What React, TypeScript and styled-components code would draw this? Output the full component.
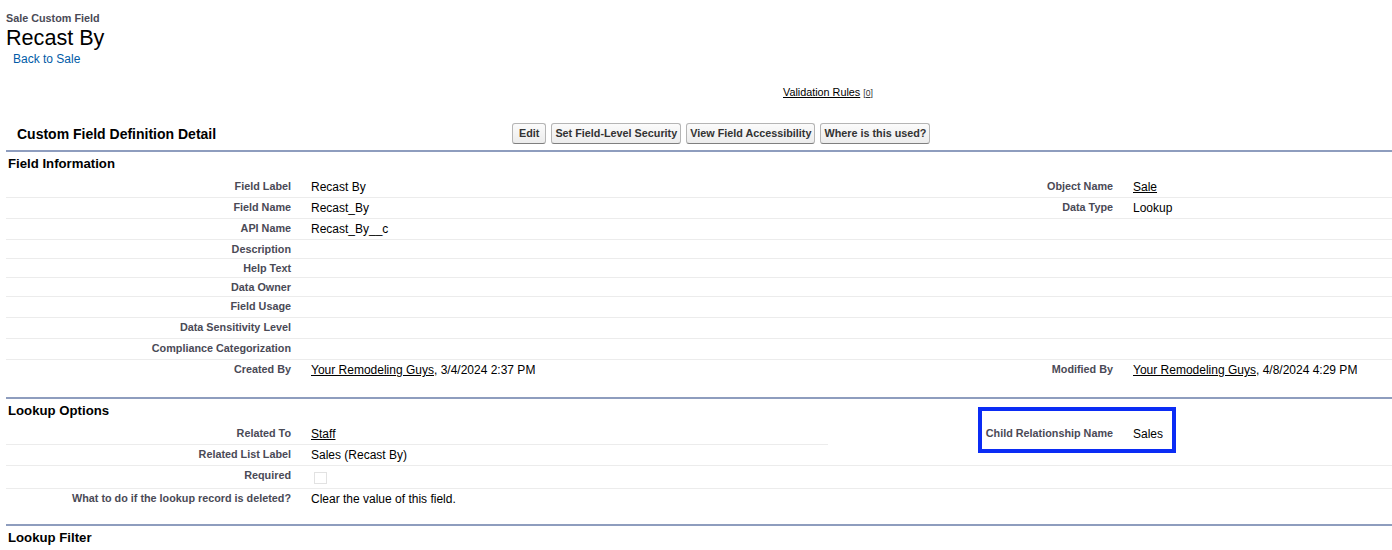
import React from "react";
import styled, { createGlobalStyle } from "styled-components";

const GlobalStyle = createGlobalStyle`
  html, body {
    margin: 0;
    padding: 0;
    background: #fff;
  }
  body {
    font-family: "Liberation Sans", Arial, sans-serif;
    font-size: 12px;
    color: #000;
  }
`;

type Cell = { text?: React.ReactNode; link?: string; after?: string; check?: boolean };

interface FieldRow {
  label: string;
  value?: Cell;
  label2?: string;
  value2?: Cell;
  plainRight?: boolean;
}

const NBSP = "\u00a0";

const fieldInfo: FieldRow[] = [
  { label: "Field Label", value: { text: "Recast By" }, label2: "Object Name", value2: { link: "Sale" } },
  { label: "Field Name", value: { text: "Recast_By" }, label2: "Data Type", value2: { text: "Lookup" } },
  { label: "API Name", value: { text: "Recast_By__c" } },
  { label: "Description" },
  { label: "Help Text" },
  { label: "Data Owner" },
  { label: "Field Usage", value: { text: NBSP } },
  { label: "Data Sensitivity Level", value: { text: NBSP } },
  { label: "Compliance Categorization", value: { text: NBSP } },
  {
    label: "Created By",
    value: { link: "Your Remodeling Guys", after: ", 3/4/2024 2:37 PM" },
    label2: "Modified By",
    value2: { link: "Your Remodeling Guys", after: ", 4/8/2024 4:29 PM" },
  },
];

const lookupOptions: FieldRow[] = [
  {
    label: "Related To",
    value: { link: "Staff" },
    label2: "Child Relationship Name",
    value2: { text: "Sales" },
    plainRight: true,
  },
  { label: "Related List Label", value: { text: "Sales (Recast By)" } },
  { label: "Required", value: { check: true } },
  { label: "What to do if the lookup record is deleted?", value: { text: "Clear the value of this field." } },
];

const CellContent: React.FC<{ cell?: Cell }> = ({ cell }) => {
  if (!cell) return null;
  if (cell.check) {
    return (
      <CheckImage width="21" height="16" viewBox="0 0 21 16">
        <rect x="3.5" y="3.5" width="12" height="11" fill="#fff" stroke="#c4c4c4" strokeDasharray="1 1" />
      </CheckImage>
    );
  }
  return (
    <>
      {cell.link && <DataLink href="#">{cell.link}</DataLink>}
      {cell.after}
      {cell.text}
    </>
  );
};

const DetailTable: React.FC<{ rows: FieldRow[] }> = ({ rows }) => (
  <div>
    {rows.map((r, i) => {
      const last = i === rows.length - 1;
      return (
        <Row key={r.label}>
          <Label $plain={last}>{r.label}</Label>
          <Value $plain={last}>
            <CellContent cell={r.value} />
          </Value>
          <Label $plain={last || r.plainRight}>{r.label2}</Label>
          <Value $plain={last || r.plainRight}>
            <CellContent cell={r.value2} />
          </Value>
        </Row>
      );
    })}
  </div>
);

const App: React.FC = () => {
  return (
    <Page>
      <GlobalStyle />
      <Header>
        <Kicker>Sale Custom Field</Kicker>
        <PageTitle>Recast By</PageTitle>
        <BackLink href="#">Back to Sale</BackLink>
      </Header>

      <ListLinks>
        <DataLink href="#">Validation Rules</DataLink>
        <Count>
          [<u>0</u>]
        </Count>
      </ListLinks>

      <TitleRow>
        <BlockTitle>Custom Field Definition Detail</BlockTitle>
        <ButtonGroup>
          <Button>{NBSP}Edit{NBSP}</Button>
          <Button>Set Field-Level Security</Button>
          <Button>View Field Accessibility</Button>
          <Button>Where is this used?</Button>
        </ButtonGroup>
      </TitleRow>

      <Section $top={6}>
        <SectionHeader>Field Information</SectionHeader>
        <DetailTable rows={fieldInfo} />
      </Section>

      <Section $top={16}>
        <SectionHeader>Lookup Options</SectionHeader>
        <DetailTable rows={lookupOptions} />
      </Section>

      <Section $top={14}>
        <SectionHeader>Lookup Filter</SectionHeader>
      </Section>

      <Highlight />
    </Page>
  );
};

export default App;

const Page = styled.div`
  position: relative;
  width: 1392px;
  box-sizing: border-box;
  padding: 12px 0 0 6px;
`;

const Header = styled.div`
  display: flex;
  flex-direction: column;
  align-items: flex-start;
`;

const Kicker = styled.div`
  font-size: 10.8px;
  font-weight: bold;
  line-height: 13px;
  color: #4a4a56;
`;

const PageTitle = styled.h1`
  margin: 0;
  font-size: 21.6px;
  font-weight: normal;
  line-height: 25px;
  color: #000;
`;

const BackLink = styled.a`
  margin: 2px 0 0 7px;
  font-size: 12px;
  line-height: 14px;
  color: #015ba7;
  text-decoration: none;
`;

const ListLinks = styled.div`
  margin-top: 20px;
  padding-left: 777px;
  font-size: 10.8px;
  line-height: 13px;
`;

const DataLink = styled.a`
  color: #000;
  text-decoration: underline;
`;

const Count = styled.span`
  margin-left: 3px;
  font-size: 8.6px;
  color: #333;
`;

const TitleRow = styled.div`
  display: flex;
  align-items: center;
  margin-top: 23px;
  height: 21px;
`;

const BlockTitle = styled.h2`
  margin: 0;
  width: 506px;
  box-sizing: border-box;
  padding: 2px 0 0 11px;
  font-size: 14px;
  font-weight: bold;
  line-height: 17px;
  color: #000;
`;

const ButtonGroup = styled.div`
  display: flex;
  gap: 5px;
`;

const Button = styled.button`
  margin: 0;
  padding: 3px 3px;
  height: 21px;
  font-family: "Liberation Sans", Arial, sans-serif;
  font-size: 10.8px;
  font-weight: bold;
  line-height: 13px;
  color: #333;
  background: linear-gradient(#fbfbfb, #ececec);
  border: 1px solid #b5b5b5;
  border-bottom-color: #7f7f7f;
  border-radius: 3px;
  white-space: nowrap;
  cursor: pointer;
`;

const Section = styled.div<{ $top: number }>`
  margin-top: ${(p) => p.$top}px;
  border-top: 2px solid #8e9dbe;
`;

const SectionHeader = styled.h3`
  margin: 0;
  padding: 4px 2px 6px;
  font-size: 13.2px;
  font-weight: bold;
  line-height: 15px;
  color: #000;
`;

const Row = styled.div`
  display: grid;
  grid-template-columns: 295px 527px 295px 269px;
`;

const Label = styled.div<{ $plain?: boolean }>`
  padding: 3px 10px 3px 2px;
  text-align: right;
  font-size: 10.8px;
  font-weight: bold;
  line-height: 12px;
  color: #4a4a56;
  border-bottom: 1px solid ${(p) => (p.$plain ? "transparent" : "#ececec")};
`;

const Value = styled.div<{ $plain?: boolean }>`
  padding: 3px 10px;
  font-size: 12px;
  line-height: 14px;
  color: #000;
  border-bottom: 1px solid ${(p) => (p.$plain ? "transparent" : "#ececec")};
`;

const CheckImage = styled.svg`
  display: block;
`;

const Highlight = styled.div`
  position: absolute;
  left: 978px;
  top: 407px;
  width: 198px;
  height: 46px;
  box-sizing: border-box;
  border: 4px solid #0b2cf5;
  pointer-events: none;
`;
